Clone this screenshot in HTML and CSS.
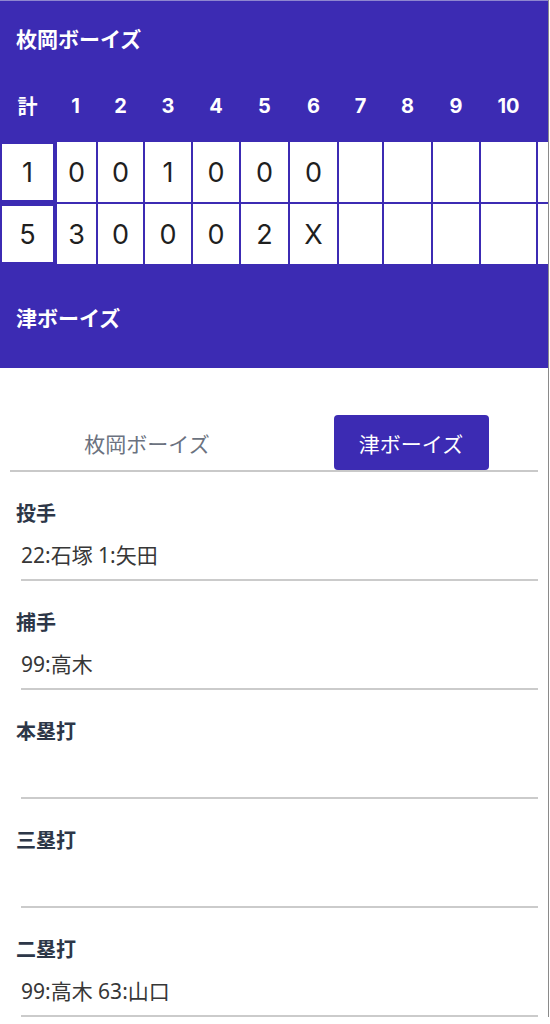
FILE: index.html
```html
<!DOCTYPE html>
<html lang="ja">
  <head>
    <title>試合結果</title>
    <link rel="stylesheet" href="styles.css">
  </head>
  <body>
    <div class="page">
      <div class="band">
        <h2 class="team-name">枚岡ボーイズ</h2>

        <div class="board">
          <div class="head">計</div>
          <div class="head">1</div>
          <div class="head">2</div>
          <div class="head">3</div>
          <div class="head">4</div>
          <div class="head">5</div>
          <div class="head">6</div>
          <div class="head">7</div>
          <div class="head">8</div>
          <div class="head">9</div>
          <div class="head">10</div>
          <div class="head"></div>
        </div>

        <div class="board scores">
          <div class="total">1</div>
          <div class="inning first">0</div>
          <div class="inning">0</div>
          <div class="inning">1</div>
          <div class="inning">0</div>
          <div class="inning">0</div>
          <div class="inning">0</div>
          <div class="inning"></div>
          <div class="inning"></div>
          <div class="inning"></div>
          <div class="inning"></div>
          <div class="inning"></div>

          <div class="total">5</div>
          <div class="inning first">3</div>
          <div class="inning">0</div>
          <div class="inning">0</div>
          <div class="inning">0</div>
          <div class="inning">2</div>
          <div class="inning">X</div>
          <div class="inning"></div>
          <div class="inning"></div>
          <div class="inning"></div>
          <div class="inning"></div>
          <div class="inning"></div>
        </div>

        <h2 class="team-name bottom">津ボーイズ</h2>
      </div>

      <div class="tabs">
        <div class="tab-row">
          <div class="tab">枚岡ボーイズ</div>
          <div class="tab"><span class="active">津ボーイズ</span></div>
        </div>
      </div>

      <div class="record">
        <div class="label">投手</div>
        <div class="value">22:石塚 1:矢田</div>
      </div>
      <div class="record">
        <div class="label">捕手</div>
        <div class="value">99:高木</div>
      </div>
      <div class="record">
        <div class="label">本塁打</div>
        <div class="value"></div>
      </div>
      <div class="record">
        <div class="label">三塁打</div>
        <div class="value"></div>
      </div>
      <div class="record">
        <div class="label">二塁打</div>
        <div class="value">99:高木 63:山口</div>
      </div>
    </div>
  </body>
</html>
```

FILE: styles.css
```css
body {
  margin: 0;
  background-color: white;
  font-family: "Noto Sans", "Noto Sans CJK JP", sans-serif;
}

.page {
  width: 548px;
  border-right: 1px solid #8a8a8a;
  overflow: hidden;
}

.band {
  background-color: #3c2bb3;
  border-top: 1px solid #8e86cf;
  padding: 23px 0 37px;
  overflow: hidden;
}

.team-name {
  margin: 0;
  padding-left: 16px;
  color: white;
  font-family: "Noto Sans CJK JP", sans-serif;
  font-size: 21px;
  font-weight: 700;
  line-height: 28px;
}

.team-name.bottom {
  margin-top: 39px;
}

.board {
  display: grid;
  grid-template-columns: 51px 41px 45px 46px 46px 47px 47px 43px 47px 46px 55px 30px;
  column-gap: 2px;
  margin-left: 2px;
  margin-top: 40px;
  font-family: Inter, "Noto Sans CJK JP", sans-serif;
}

.head {
  color: white;
  font-size: 20px;
  font-weight: 700;
  line-height: 28px;
  text-align: center;
}

.head:first-child {
  font-family: "Noto Sans CJK JP", sans-serif;
}

.scores {
  margin-top: 22px;
  row-gap: 2px;
  grid-auto-rows: 60px;
}

.total,
.inning {
  background-color: white;
  color: #1f1f1f;
  font-size: 27px;
  display: flex;
  align-items: center;
  justify-content: center;
}

.total {
  margin: 2px 0;
}

.inning.first {
  margin-left: 2px;
}

.tabs {
  margin: 47px 10px 0;
  border-bottom: 2px solid #c9c9c9;
}

.tab-row {
  display: grid;
  grid-template-columns: 1fr 1fr;
  margin: 0 -5px 0 5px;
}

.tab {
  display: flex;
  align-items: center;
  justify-content: center;
  height: 55px;
  color: #6b7280;
  font-size: 21px;
  font-family: "Noto Sans CJK JP", sans-serif;
}

.active {
  display: flex;
  align-items: center;
  justify-content: center;
  width: 155px;
  height: 55px;
  border-radius: 4px;
  background-color: #3c2bb3;
  color: white;
}

.record {
  margin: 27px 10px 0 16px;
}

.label {
  color: #2d3748;
  font-family: "Noto Sans CJK JP", sans-serif;
  font-size: 20px;
  font-weight: 700;
  line-height: 28px;
}

.value {
  margin: 14px 0 0 5px;
  padding-bottom: 10px;
  height: 28px;
  border-bottom: 2px solid #cbcbcb;
  color: #373737;
  font-size: 21px;
  line-height: 28px;
}
```
